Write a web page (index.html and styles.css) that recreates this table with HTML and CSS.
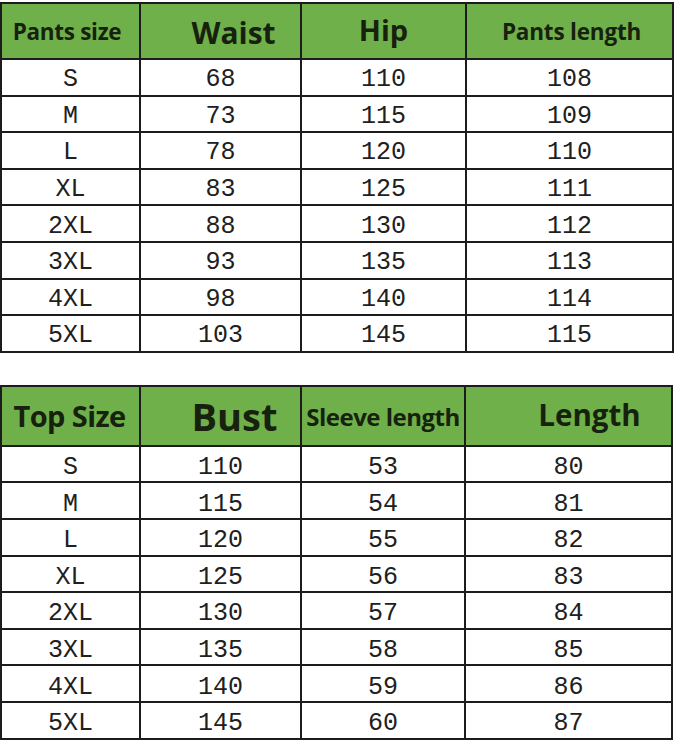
FILE: index.html
```html
<!DOCTYPE html>
<html>
<head>
<meta charset="utf-8">
<link rel="stylesheet" href="styles.css">
</head>
<body>
<div class="page">
  <table class="chart pants">
    <colgroup><col class="c1"><col class="c2"><col class="c3"><col class="c4"></colgroup>
    <thead>
      <tr>
        <th><span class="h-pants">Pants size</span></th>
        <th><span class="h-waist">Waist</span></th>
        <th><span class="h-hip">Hip</span></th>
        <th><span class="h-plen">Pants length</span></th>
      </tr>
    </thead>
    <tbody>
      <tr><td>S</td><td>68</td><td>110</td><td>108</td></tr>
      <tr><td>M</td><td>73</td><td>115</td><td>109</td></tr>
      <tr><td>L</td><td>78</td><td>120</td><td>110</td></tr>
      <tr><td>XL</td><td>83</td><td>125</td><td>111</td></tr>
      <tr><td>2XL</td><td>88</td><td>130</td><td>112</td></tr>
      <tr><td>3XL</td><td>93</td><td>135</td><td>113</td></tr>
      <tr><td>4XL</td><td>98</td><td>140</td><td>114</td></tr>
      <tr><td>5XL</td><td>103</td><td>145</td><td>115</td></tr>
    </tbody>
  </table>

  <table class="chart top">
    <colgroup><col class="c1"><col class="c2"><col class="c3b"><col class="c4"></colgroup>
    <thead>
      <tr>
        <th><span class="h-top">Top Size</span></th>
        <th><span class="h-bust">Bust</span></th>
        <th><span class="h-sleeve">Sleeve length</span></th>
        <th><span class="h-len">Length</span></th>
      </tr>
    </thead>
    <tbody>
      <tr><td>S</td><td>110</td><td>53</td><td>80</td></tr>
      <tr><td>M</td><td>115</td><td>54</td><td>81</td></tr>
      <tr><td>L</td><td>120</td><td>55</td><td>82</td></tr>
      <tr><td>XL</td><td>125</td><td>56</td><td>83</td></tr>
      <tr><td>2XL</td><td>130</td><td>57</td><td>84</td></tr>
      <tr><td>3XL</td><td>135</td><td>58</td><td>85</td></tr>
      <tr><td>4XL</td><td>140</td><td>59</td><td>86</td></tr>
      <tr><td>5XL</td><td>145</td><td>60</td><td>87</td></tr>
    </tbody>
  </table>
</div>
</body>
</html>
```

FILE: styles.css
```css
html, body {
  margin: 0;
  padding: 0;
  background: #ffffff;
}

.page {
  padding: 2px 0 0 0;
  display: flex;
  flex-direction: column;
  gap: 32px;
}

.chart {
  border-collapse: collapse;
  table-layout: fixed;
  width: 673px;
  margin-left: 0;
}

.c1 { width: 139px; }
.c2 { width: 161px; }
.c3 { width: 165px; }
.c3b { width: 164px; }
.c4 { width: 207px; }

.chart th,
.chart td {
  border: 2px solid #1c1c1c;
  padding: 0;
  text-align: center;
  overflow: hidden;
  white-space: nowrap;
}

.chart th {
  background: #70b04a;
  color: #16220e;
  font-family: "Open Sans", "Noto Sans", sans-serif;
  font-weight: 700;
  line-height: 1;
}

.pants thead tr { height: 56px; }
.top thead tr { height: 60px; }

.chart tbody tr { height: 36.6px; }

.chart td {
  font-family: "Liberation Mono", "DejaVu Sans Mono", monospace;
  font-size: 25px;
  color: #202020;
  line-height: 1;
  padding-top: 5px;
}

.top td { padding-top: 7px; }

.h-pants { font-size: 22.5px; letter-spacing: -0.3px; display: inline-block; padding-top: 2px; padding-right: 7px; }
.h-waist { font-size: 30px; display: inline-block; padding-left: 26px; padding-top: 4px; }
.h-hip { font-size: 29px; display: inline-block; padding-bottom: 4px; }
.h-plen { font-size: 22.5px; letter-spacing: -0.2px; display: inline-block; padding-top: 2px; padding-left: 4px; }

.h-top { font-size: 29px; letter-spacing: -0.6px; display: inline-block; padding-right: 2px; }
.h-bust { font-size: 38px; display: inline-block; padding-left: 28px; }
.h-sleeve { font-size: 24px; letter-spacing: -0.5px; display: inline-block; padding-top: 2px; }
.h-len { font-size: 29.5px; display: inline-block; padding-bottom: 2px; padding-left: 42px; }
```
